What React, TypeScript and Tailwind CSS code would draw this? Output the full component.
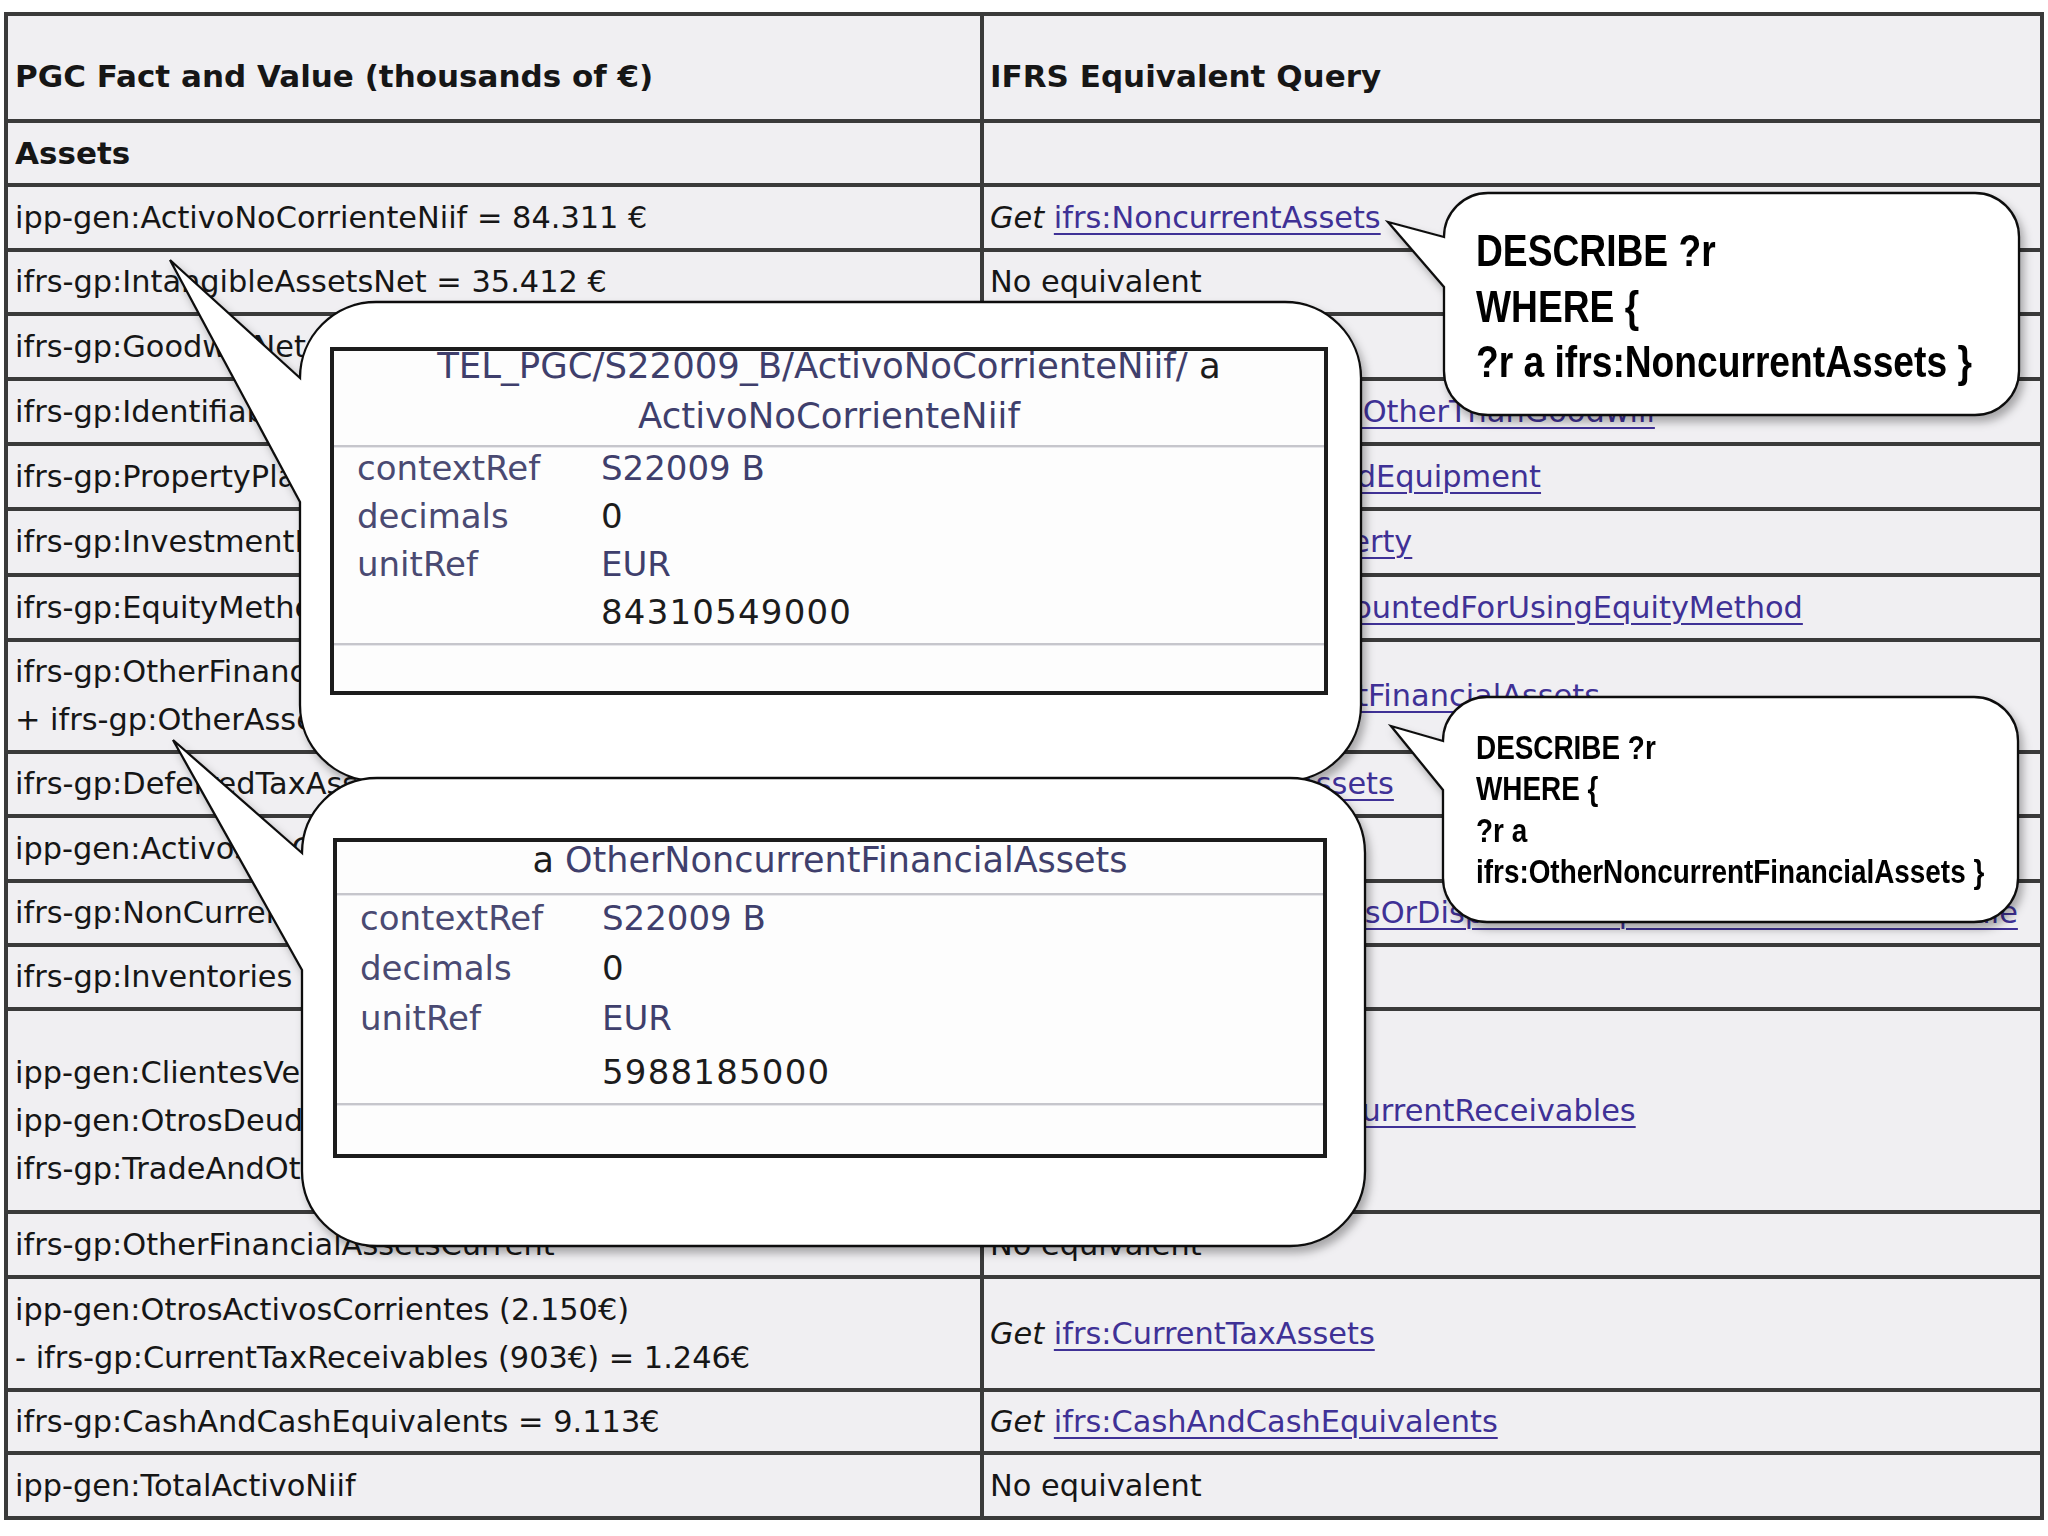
import React from "react";

const FONT = "[font-family:'DejaVu_Sans','Liberation_Sans',sans-serif]";
const NARROW = "[font-family:'Liberation_Sans',Arial,sans-serif]";

function Get({ term }: { term: string }) {
  return (
    <span>
      <i>Get</i>{" "}
      <span className="text-[#3f3196] underline decoration-2 underline-offset-[5px]">{term}</span>
    </span>
  );
}

type Row = { h: string; left: React.ReactNode; right: React.ReactNode; leftPad?: string };

const rows: Row[] = [
  { h: "h-[64px]", left: <b className="text-[31px]">Assets</b>, right: null },
  { h: "h-[65px]", left: "ipp-gen:ActivoNoCorrienteNiif = 84.311 €", right: <Get term="ifrs:NoncurrentAssets" /> },
  { h: "h-[64px]", left: "ifrs-gp:IntangibleAssetsNet = 35.412 €", right: "No equivalent" },
  { h: "h-[65px]", left: "ifrs-gp:GoodwillNet", right: null },
  { h: "h-[65px]", left: "ifrs-gp:IdentifiableIntangibleAssetsNet", right: <Get term="ifrs:IntangibleAssetsOtherThanGoodwill" /> },
  { h: "h-[65px]", left: "ifrs-gp:PropertyPlantEquipmentNet", right: <Get term="ifrs:PropertyPlantAndEquipment" /> },
  { h: "h-[66px]", left: "ifrs-gp:InvestmentPropertyNet", right: <Get term="ifrs:InvestmentProperty" /> },
  { h: "h-[65px]", left: "ifrs-gp:EquityMethodInvestments", right: <Get term="ifrs:InvestmentsAccountedForUsingEquityMethod" /> },
  {
    h: "h-[112px]",
    left: (
      <>
        <div>ifrs-gp:OtherFinancialAssetsNonCurrent</div>
        <div>+ ifrs-gp:OtherAssetsNonCurrent</div>
      </>
    ),
    right: <Get term="ifrs:OtherNoncurrentFinancialAssets" />,
  },
  { h: "h-[64px]", left: "ifrs-gp:DeferredTaxAssets", right: <Get term="ifrs:DeferredTaxAssets" /> },
  { h: "h-[65px]", left: "ipp-gen:ActivosNoCorrientesMantenidosVenta", right: null },
  { h: "h-[64px]", left: "ifrs-gp:NonCurrentAssetsHeldSale", right: <Get term="ifrs:NoncurrentAssetsOrDisposalGroupsClassifiedAsHeldForSale" /> },
  { h: "h-[64px]", left: "ifrs-gp:Inventories", right: null },
  {
    h: "h-[203px]",
    leftPad: "pt-[20px]",
    left: (
      <>
        <div>ipp-gen:ClientesVentasPrestacionesServicios</div>
        <div>ipp-gen:OtrosDeudores</div>
        <div>ifrs-gp:TradeAndOtherReceivables</div>
      </>
    ),
    right: <Get term="ifrs:TradeAndOtherCurrentReceivables" />,
  },
  { h: "h-[65px]", left: "ifrs-gp:OtherFinancialAssetsCurrent", right: "No equivalent" },
  {
    h: "h-[113px]",
    left: (
      <>
        <div>ipp-gen:OtrosActivosCorrientes (2.150€)</div>
        <div>- ifrs-gp:CurrentTaxReceivables (903€) = 1.246€</div>
      </>
    ),
    right: <Get term="ifrs:CurrentTaxAssets" />,
  },
  { h: "h-[63px]", left: "ifrs-gp:CashAndCashEquivalents = 9.113€", right: <Get term="ifrs:CashAndCashEquivalents" /> },
  { h: "h-[65px]", left: "ipp-gen:TotalActivoNiif", right: "No equivalent" },
];

function Bubbles() {
  return (
    <svg className="absolute left-0 top-0 pointer-events-none" width={2048} height={1536} viewBox="0 0 2048 1536">
      <defs>
        <filter id="sh" x="-10%" y="-10%" width="130%" height="130%">
          <feDropShadow dx="4" dy="6" stdDeviation="4" floodColor="#000" floodOpacity="0.3" />
        </filter>
      </defs>
      <g fill="#ffffff" stroke="#111" strokeWidth="2.3" strokeLinejoin="miter" filter="url(#sh)">
        <path d="M300,378 L170,260 L300,502 L300,705 A76,76 0 0 0 376,781 L1285,781 A76,76 0 0 0 1361,705 L1361,378 A76,76 0 0 0 1285,302 L376,302 A76,76 0 0 0 300,378 Z" />
        <path d="M302,853 L173,740 L302,970 L302,1171 A75,75 0 0 0 377,1246 L1290,1246 A75,75 0 0 0 1365,1171 L1365,853 A75,75 0 0 0 1290,778 L377,778 A75,75 0 0 0 302,853 Z" />
        <path d="M1444,237 L1388,222 L1444,287 L1444,371 A44,44 0 0 0 1488,415 L1975,415 A44,44 0 0 0 2019,371 L2019,237 A44,44 0 0 0 1975,193 L1488,193 A44,44 0 0 0 1444,237 Z" />
        <path d="M1443,741 L1391,726 L1443,790 L1443,878 A44,44 0 0 0 1487,922 L1974,922 A44,44 0 0 0 2018,878 L2018,741 A44,44 0 0 0 1974,697 L1487,697 A44,44 0 0 0 1443,741 Z" />
      </g>
    </svg>
  );
}

function Sep() {
  return <div className="h-[3px] bg-[#c6c6cc] border-b border-[#e6e6ea]" />;
}

export default function App() {
  return (
    <div className={`relative w-[2048px] h-[1536px] bg-white text-[#161616] ${FONT}`}>
      {/* table */}
      <div className="ml-[4px] pt-[12px]">
        <div className="w-[2040px] border-4 border-[#3a3a3a] bg-[#f0eff2] text-[30.4px] leading-[48px]">
          <div className="flex h-[103px] font-bold text-[31px]">
            <div className="w-[976px] border-r-4 border-[#3a3a3a] flex items-center pl-[7px] pt-[17px]">
              PGC Fact and Value (thousands of €)
            </div>
            <div className="flex-1 flex items-center pl-[6px] pt-[17px]">IFRS Equivalent Query</div>
          </div>
          {rows.map((r, i) => (
            <div key={i} className={`flex border-t-4 border-[#3a3a3a] ${r.h}`}>
              <div
                className={`w-[976px] border-r-4 border-[#3a3a3a] flex flex-col justify-center pl-[7px] whitespace-nowrap overflow-hidden ${r.leftPad ?? ""}`}
              >
                {r.left}
              </div>
              <div className="flex-1 flex items-center pl-[6px] whitespace-nowrap overflow-hidden">{r.right}</div>
            </div>
          ))}
        </div>
      </div>

      <Bubbles />

      {/* panel 1 */}
      <div className="absolute left-[330px] top-[347px] w-[998px] h-[348px] border-4 border-[#1c1c1c] bg-[#fdfdfd] flex flex-col text-[34px]">
        <div className="h-[94px]">
          <div className="-mt-[10px] leading-[50px] flex flex-col items-center text-[35.5px] text-[#3f3f6c]">
            <div>
              TEL_PGC/S22009_B/ActivoNoCorrienteNiif/ <span className="text-[#1c1c1c]">a</span>
            </div>
            <div>ActivoNoCorrienteNiif</div>
          </div>
        </div>
        <Sep />
        <div className="-mt-[4px] grid grid-cols-[244px_1fr] pl-[23px] leading-[48px]">
          <div className="text-[#4a4a72]">contextRef</div>
          <div className="text-[#3f3f6c]">S22009 B</div>
          <div className="text-[#4a4a72]">decimals</div>
          <div className="text-[#1c1c1c]">0</div>
          <div className="text-[#4a4a72]">unitRef</div>
          <div className="text-[#3f3f6c]">EUR</div>
          <div />
          <div className="text-[#1c1c1c] tracking-[1.2px]">84310549000</div>
        </div>
        <div className="mt-[7px]">
          <Sep />
        </div>
        <div className="flex-1" />
      </div>

      {/* panel 2 */}
      <div className="absolute left-[333px] top-[838px] w-[994px] h-[320px] border-4 border-[#1c1c1c] bg-[#fdfdfd] flex flex-col text-[34px]">
        <div className="h-[51px]">
          <div className="-mt-[7px] leading-[50px] flex justify-center text-[35px]">
            <span className="text-[#1c1c1c]">a&nbsp;</span>
            <span className="text-[#3f3f6c]">OtherNoncurrentFinancialAssets</span>
          </div>
        </div>
        <Sep />
        <div className="-mt-[3px] grid grid-cols-[242px_1fr] pl-[23px] leading-[50px]">
          <div className="text-[#4a4a72]">contextRef</div>
          <div className="text-[#3f3f6c]">S22009 B</div>
          <div className="text-[#4a4a72]">decimals</div>
          <div className="text-[#1c1c1c]">0</div>
          <div className="text-[#4a4a72]">unitRef</div>
          <div className="text-[#3f3f6c]">EUR</div>
          <div className="mt-[4px]" />
          <div className="mt-[4px] text-[#1c1c1c] tracking-[1.2px]">5988185000</div>
        </div>
        <div className="mt-[6px]">
          <Sep />
        </div>
        <div className="flex-1" />
      </div>

      {/* right bubble texts */}
      <div
        className={`absolute left-[1476px] top-[223px] text-[44px] leading-[55.5px] font-bold text-black whitespace-nowrap origin-left scale-x-[0.845] ${NARROW}`}
      >
        <div>DESCRIBE ?r</div>
        <div>WHERE {"{"}</div>
        <div>?r a ifrs:NoncurrentAssets {"}"}</div>
      </div>
      <div
        className={`absolute left-[1476px] top-[727px] text-[33px] leading-[41.3px] font-bold text-black whitespace-nowrap origin-left scale-x-[0.845] ${NARROW}`}
      >
        <div>DESCRIBE ?r</div>
        <div>WHERE {"{"}</div>
        <div>?r a</div>
        <div>ifrs:OtherNoncurrentFinancialAssets {"}"}</div>
      </div>
    </div>
  );
}
